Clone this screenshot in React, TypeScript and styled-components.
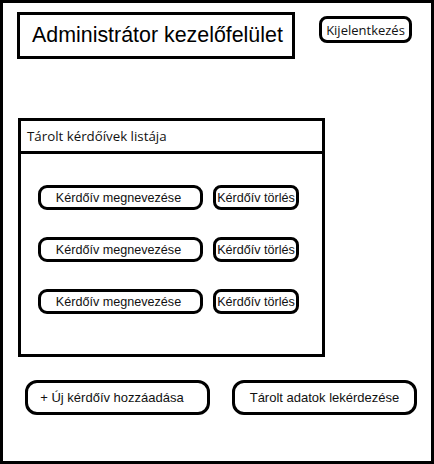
import styled, { createGlobalStyle } from 'styled-components';

const Global = createGlobalStyle`
  html, body { margin: 0; padding: 0; background: #fff; }
  * { box-sizing: border-box; }
`;

const Page = styled.div`
  width: 434px;
  height: 464px;
  border: 3px solid #000;
  background: #fff;
  font-family: 'Liberation Sans', Arial, sans-serif;
  color: #000;
`;

const Header = styled.div`
  display: flex;
  align-items: flex-start;
  padding: 9px 0 0 14px;
`;

const TitleBox = styled.div`
  width: 278px;
  height: 47px;
  border: 3px solid #000;
  display: flex;
  align-items: center;
  padding-left: 12px;
  font-size: 21.4px;
`;

const Pill = styled.div<{ $w: number; $h: number; $r?: number; $size?: number; $sans?: boolean; $shift?: number }>`
  width: ${p => p.$w}px;
  height: ${p => p.$h}px;
  border: 3px solid #000;
  border-radius: ${p => p.$r ?? 9}px;
  display: flex;
  align-items: center;
  justify-content: center;
  padding-right: ${p => p.$shift ?? 0}px;
  font-size: ${p => p.$size ?? 13}px;
  font-family: ${p => (p.$sans ? "'Open Sans', 'Noto Sans', sans-serif" : "'Liberation Sans', Arial, sans-serif")};
  color: #111;
  white-space: nowrap;
`;

const Logout = styled(Pill)`
  margin: 4px 0 0 24px;
`;

const Panel = styled.div`
  width: 307px;
  height: 239px;
  margin: 59px 0 0 15px;
  border: 3px solid #000;
`;

const PanelHead = styled.div`
  height: 33px;
  border-bottom: 3px solid #000;
  display: flex;
  align-items: center;
  padding-left: 6px;
  font-family: 'Open Sans', 'Noto Sans', sans-serif;
  font-size: 13.3px;
  color: #111;
`;

const List = styled.div`
  display: flex;
  flex-direction: column;
  gap: 27px;
  padding: 31px 0 0 17px;
`;

const Row = styled.div`
  display: flex;
  gap: 10px;
`;

const Footer = styled.div`
  display: flex;
  gap: 22px;
  margin: 23px 0 0 22px;
`;

export default function App() {
  const rows = [0, 1, 2];
  return (
    <>
      <Global />
      <Page>
        <Header>
          <TitleBox>Administrátor kezelőfelület</TitleBox>
          <Logout $w={93} $h={27} $r={8} $sans>Kijelentkezés</Logout>
        </Header>
        <Panel>
          <PanelHead>Tárolt kérdőívek listája</PanelHead>
          <List>
            {rows.map(i => (
              <Row key={i}>
                <Pill $w={165} $h={25} $r={9} $size={12.6} $shift={4}>Kérdőív megnevezése</Pill>
                <Pill $w={86} $h={25} $r={8} $size={12.6}>Kérdőív törlés</Pill>
              </Row>
            ))}
          </List>
        </Panel>
        <Footer>
          <Pill $w={185} $h={35} $r={12} $shift={11}>+ Új kérdőív hozzáadása</Pill>
          <Pill $w={185} $h={35} $r={12}>Tárolt adatok lekérdezése</Pill>
        </Footer>
      </Page>
    </>
  );
}
